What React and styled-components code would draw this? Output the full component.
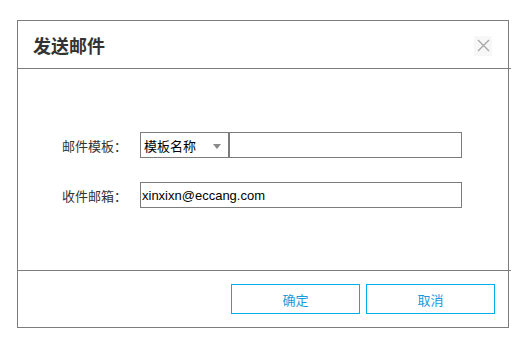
import React from "react";
import styled, { createGlobalStyle } from "styled-components";

const GlobalStyle = createGlobalStyle`
	* {
		box-sizing: border-box;
	}
	body {
		margin: 0;
		background: #ffffff;
		font-family: "Liberation Sans", "Noto Sans CJK SC", sans-serif;
	}
`;

const Dialog = styled.div`
	margin: 20px 0 0 17px;
	width: 492px;
	height: 308px;
	border: 1px solid #7c7c7c;
	background: #fff;
	display: flex;
	flex-direction: column;
`;

const Header = styled.div`
	height: 48px;
	margin-right: -3px;
	padding: 0 19px 0 15px;
	border-bottom: 1px solid #7c7c7c;
	display: flex;
	align-items: center;
	justify-content: space-between;
`;

const Title = styled.h2`
	margin: 0;
	font-family: "Noto Sans CJK SC", sans-serif;
	font-size: 18px;
	font-weight: 700;
	color: #333;
	line-height: 1;
	padding-top: 1px;
`;

const Close = styled.button`
	width: 18px;
	height: 20px;
	padding: 0;
	border: none;
	background: #f7f7f7;
	display: flex;
	align-items: center;
	justify-content: center;
	cursor: pointer;
	margin-top: 2px;
`;

const Body = styled.div`
	flex: 1;
	padding: 63px 0 0 44px;
	display: flex;
	flex-direction: column;
	gap: 24px;
`;

const Row = styled.div`
	display: flex;
	align-items: center;
	height: 26px;
`;

const Label = styled.label`
	width: 78px;
	font-family: "Noto Sans CJK SC", sans-serif;
	font-size: 13px;
	color: #333;
`;

const Select = styled.div`
	width: 89px;
	height: 26px;
	border: 1px solid #7c7c7c;
	display: flex;
	align-items: center;
	justify-content: space-between;
	padding: 0 7px 0 3px;
	font-family: "Noto Sans CJK SC", sans-serif;
	font-size: 13px;
	color: #000;
`;

const Arrow = styled.span`
	width: 0;
	height: 0;
	border-left: 4px solid transparent;
	border-right: 4px solid transparent;
	border-top: 5px solid #8a8a8a;
	margin-top: 2px;
`;

const Input = styled.input`
	width: ${(props) => props.width}px;
	height: 26px;
	border: 1px solid #7c7c7c;
	margin: 0;
	padding: 0 1px;
	font-family: "Liberation Sans", "Noto Sans CJK SC", sans-serif;
	font-size: 13px;
	color: #000;
	outline: none;
`;

const Footer = styled.div`
	height: 57px;
	border-top: 1px solid #7c7c7c;
	margin-right: -3px;
	padding: 13px 16px 0 0;
	display: flex;
	justify-content: flex-end;
	gap: 6px;
`;

const Button = styled.button`
	width: 129px;
	height: 30px;
	border: 1px solid #00aeef;
	background: #fff;
	color: #1a9ad8;
	font-family: "Noto Sans CJK SC", sans-serif;
	font-size: 13px;
	cursor: pointer;
	padding: 0;
`;

const App = () => {
	return (
		<>
			<GlobalStyle />
			<Dialog>
				<Header>
					<Title>发送邮件</Title>
					<Close aria-label='关闭'>
						<svg width='13' height='13' viewBox='0 0 13 13'>
							<path
								d='M1 1 L12 12 M12 1 L1 12'
								stroke='#a8a8a8'
								strokeWidth='1.4'
								fill='none'
							/>
						</svg>
					</Close>
				</Header>

				<Body>
					<Row>
						<Label>邮件模板：</Label>
						<Select>
							模板名称
							<Arrow />
						</Select>
						<Input width={233} defaultValue='' />
					</Row>
					<Row>
						<Label>收件邮箱：</Label>
						<Input width={322} defaultValue='xinxixn@eccang.com' />
					</Row>
				</Body>

				<Footer>
					<Button>确定</Button>
					<Button>取消</Button>
				</Footer>
			</Dialog>
		</>
	);
};

export default App;
